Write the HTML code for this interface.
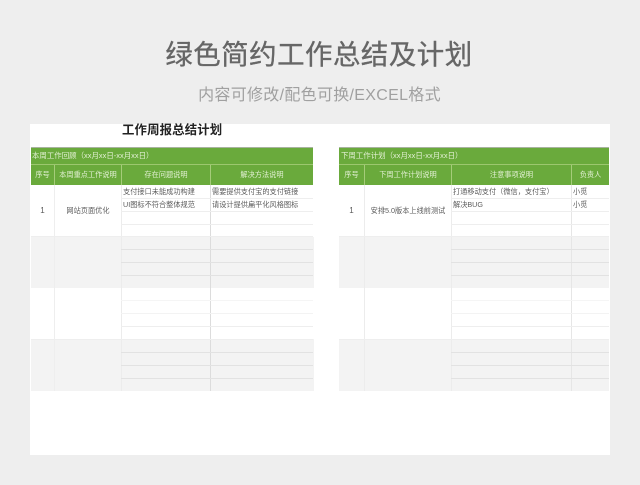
<!DOCTYPE html>
<html lang="zh">
<head>
<meta charset="utf-8">
<style>
html,body{margin:0;padding:0}
body{width:640px;height:485px;position:relative;overflow:hidden;background:#eeeeee;font-family:"Liberation Sans","Noto Sans CJK SC",sans-serif}
div{position:absolute;box-sizing:border-box}
.t{white-space:nowrap;line-height:1;filter:blur(.25px)}
.c{text-align:center}
.w{color:#e3f0d4;font-size:7.2px}
.b{font-size:7.45px;color:#e3f0d4}
.d{color:#5c5c5c;font-size:7.2px}
.v{width:1px;background:#e6e6e6}
.vg{width:1px;background:#a5cc7a}
.h{height:1px;background:#eeeeee}
.g{background:#e2e2e2}
</style>
</head>
<body>
<div class="t c" style="left:0;width:638px;top:41px;font-size:27.4px;color:#666;letter-spacing:.55px;-webkit-text-stroke:.35px #666">绿色简约工作总结及计划</div>
<div class="t c" style="left:0;width:639px;top:88px;font-size:16px;color:#a0a0a0;letter-spacing:.3px">内容可修改/配色可换/EXCEL格式</div>

<div style="left:30px;top:124px;width:580px;height:331px;background:#fff"></div>
<div class="t" style="left:122px;top:124px;font-size:12.4px;font-weight:bold;color:#222;letter-spacing:.15px">工作周报总结计划</div>

<!-- LEFT TABLE -->
<div style="left:31px;top:147px;width:282px;height:1px;background:#a9b3a0"></div>
<div style="left:31px;top:148px;width:282px;height:37px;background:#6aaa3c"></div>
<div style="left:31px;top:164px;width:282px;height:1px;background:#9cc76f"></div>
<div style="left:31px;top:237px;width:283px;height:51px;background:#f3f3f3"></div>
<div style="left:31px;top:339px;width:283px;height:52px;background:#f3f3f3"></div>
<div class="vg" style="left:54px;top:165px;height:20px"></div>
<div class="vg" style="left:121px;top:165px;height:20px"></div>
<div class="vg" style="left:210px;top:165px;height:20px"></div>
<div class="v" style="left:54px;top:185px;height:206px;background:#eeeeee"></div>
<div class="v" style="left:121px;top:185px;height:206px;background:#ececec"></div>
<div class="v" style="left:210px;top:185px;height:206px;background:#dcdcdc"></div>
<div class="h" style="left:121px;top:198px;width:192px"></div>
<div class="h" style="left:121px;top:211px;width:192px"></div>
<div class="h" style="left:121px;top:224px;width:192px"></div>
<div class="h" style="left:31px;top:236px;width:282px"></div>
<div class="h g" style="left:121px;top:249px;width:192px"></div>
<div class="h g" style="left:121px;top:262px;width:192px"></div>
<div class="h g" style="left:121px;top:275px;width:192px"></div>
<div class="h" style="left:121px;top:300px;width:192px;background:#f5f5f5"></div>
<div class="h" style="left:121px;top:313px;width:192px;background:#f3f3f3"></div>
<div class="h" style="left:121px;top:326px;width:192px"></div>
<div class="h" style="left:31px;top:339px;width:282px"></div>
<div class="h g" style="left:121px;top:352px;width:192px"></div>
<div class="h g" style="left:121px;top:365px;width:192px"></div>
<div class="h g" style="left:121px;top:378px;width:192px"></div>
<div class="t b" style="left:32px;top:152px">本周工作回顾（xx月xx日-xx月xx日）</div>
<div class="t w c" style="left:31px;width:23px;top:171px">序号</div>
<div class="t w c" style="left:55px;width:66px;top:171px">本周重点工作说明</div>
<div class="t w c" style="left:122px;width:88px;top:171px">存在问题说明</div>
<div class="t w c" style="left:211px;width:102px;top:171px">解决方法说明</div>
<div class="t d c" style="left:31px;width:23px;top:207px;font-size:8px">1</div>
<div class="t d c" style="left:55px;width:66px;top:207px">网站页面优化</div>
<div class="t d" style="left:123px;top:188px">支付接口未能成功构建</div>
<div class="t d" style="left:123px;top:201px">UI图标不符合整体规范</div>
<div class="t d" style="left:212px;top:188px">需要提供支付宝的支付链接</div>
<div class="t d" style="left:212px;top:201px">请设计提供扁平化风格图标</div>

<!-- RIGHT TABLE -->
<div style="left:339px;top:147px;width:270px;height:1px;background:#a9b3a0"></div>
<div style="left:339px;top:148px;width:270px;height:37px;background:#6aaa3c"></div>
<div style="left:339px;top:164px;width:270px;height:1px;background:#9cc76f"></div>
<div style="left:339px;top:237px;width:270px;height:51px;background:#f3f3f3"></div>
<div style="left:339px;top:339px;width:270px;height:52px;background:#f3f3f3"></div>
<div class="vg" style="left:364px;top:165px;height:20px"></div>
<div class="vg" style="left:451px;top:165px;height:20px"></div>
<div class="vg" style="left:571px;top:165px;height:20px"></div>
<div class="v" style="left:364px;top:185px;height:206px;background:#ececec"></div>
<div class="v" style="left:451px;top:185px;height:206px;background:#ececec"></div>
<div class="v" style="left:571px;top:185px;height:206px"></div>
<div class="h" style="left:451px;top:198px;width:158px"></div>
<div class="h" style="left:451px;top:211px;width:158px"></div>
<div class="h" style="left:451px;top:224px;width:158px"></div>
<div class="h" style="left:339px;top:236px;width:270px"></div>
<div class="h g" style="left:451px;top:249px;width:158px"></div>
<div class="h g" style="left:451px;top:262px;width:158px"></div>
<div class="h g" style="left:451px;top:275px;width:158px"></div>
<div class="h" style="left:451px;top:300px;width:158px;background:#f5f5f5"></div>
<div class="h" style="left:451px;top:313px;width:158px;background:#f3f3f3"></div>
<div class="h" style="left:451px;top:326px;width:158px"></div>
<div class="h" style="left:339px;top:339px;width:270px"></div>
<div class="h g" style="left:451px;top:352px;width:158px"></div>
<div class="h g" style="left:451px;top:365px;width:158px"></div>
<div class="h g" style="left:451px;top:378px;width:158px"></div>
<div class="t b" style="left:341px;top:152px">下周工作计划（xx月xx日-xx月xx日）</div>
<div class="t w c" style="left:339px;width:25px;top:171px">序号</div>
<div class="t w c" style="left:365px;width:86px;top:171px">下周工作计划说明</div>
<div class="t w c" style="left:452px;width:119px;top:171px">注意事项说明</div>
<div class="t w c" style="left:572px;width:37px;top:171px">负责人</div>
<div class="t d c" style="left:339px;width:25px;top:207px;font-size:8px">1</div>
<div class="t d c" style="left:365px;width:86px;top:207px">安排5.0版本上线前测试</div>
<div class="t d" style="left:453px;top:188px">打通移动支付（微信，支付宝）</div>
<div class="t d" style="left:453px;top:201px">解决BUG</div>
<div class="t d" style="left:573px;top:188px">小觅</div>
<div class="t d" style="left:573px;top:201px">小觅</div>
</body>
</html>
